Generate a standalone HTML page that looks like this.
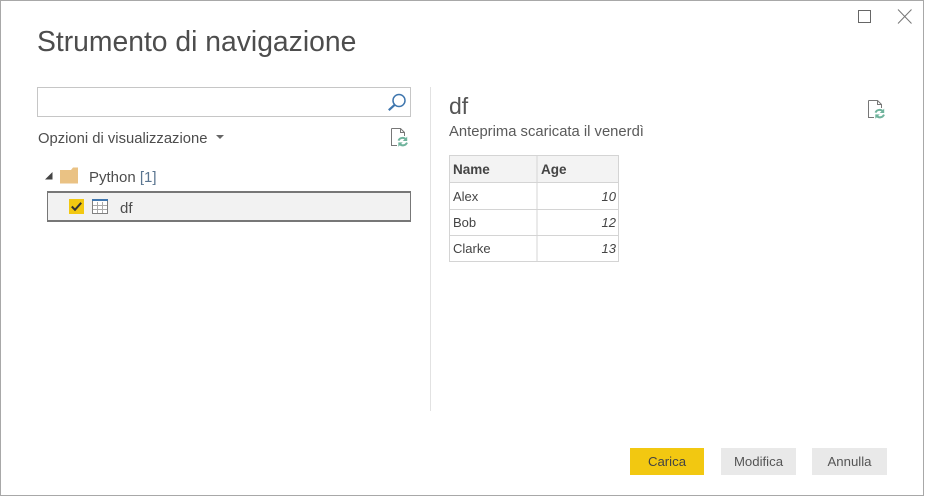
<!DOCTYPE html>
<html><head><meta charset="utf-8">
<style>
html,body{margin:0;padding:0;width:925px;height:498px;overflow:hidden;background:#fff;font-family:"Liberation Sans",sans-serif;color:#444}
div,svg{position:absolute;box-sizing:border-box}
.t{white-space:nowrap;line-height:1}
.c{position:absolute;white-space:nowrap;line-height:1;font-size:13px;color:#444}
.btn{height:27px;top:448px;text-align:center;line-height:28px;font-size:13.2px;color:#555;background:#e9e9e9}
</style></head><body>
<div style="left:0;top:0;width:924px;height:496px;border:1px solid #a8a8a8"></div>

<div class="t" style="left:37px;top:27px;font-size:28.3px;color:#4d4d4d">Strumento di navigazione</div>

<div style="left:37px;top:87px;width:374px;height:30px;border:1px solid #c6c6c6"></div>
<svg style="left:386px;top:91px" width="22" height="22" viewBox="0 0 22 22"><circle cx="13" cy="9.5" r="6" fill="none" stroke="#3f76ae" stroke-width="1.5"/><path d="M8.7 13.8L2.8 19.2" stroke="#3f76ae" stroke-width="2.2" fill="none"/></svg>

<div class="t" style="left:38px;top:132px;font-size:14.8px;color:#4d4d4d">Opzioni di visualizzazione</div>
<svg style="left:215px;top:134px" width="10" height="6"><path d="M1 1h8L5 5z" fill="#666"/></svg>

<svg style="left:390px;top:127px" width="20" height="22" viewBox="0 0 20 22"><path d="M1.5 1.5H10.5L14.5 5.5V9M1.5 1.5V18.5H7M10.5 1.5V5.5H14.5" fill="none" stroke="#777" stroke-width="1"/><path d="M8.5 13.6A4.5 4.5 0 0 1 16 12.4M17 15.6A4.5 4.5 0 0 1 9.5 16.8" fill="none" stroke="#6fb39c" stroke-width="2"/><path d="M17.2 9.6V14H12.8zM8.3 19.8V15.4H12.7z" fill="#6fb39c"/></svg>

<svg style="left:44px;top:171px" width="10" height="10"><path d="M1 8.5H8.5V1z" fill="#444"/></svg>
<svg style="left:60px;top:167px" width="19" height="17"><path d="M0 3H11L13 0.5H18V16.5H0z" fill="#eac284"/></svg>
<div class="t" style="left:89px;top:170px;font-size:15px;color:#4d4d4d">Python <span style="color:#5a7590">[1]</span></div>

<div style="left:47px;top:191px;width:364px;height:31px;background:#f2f2f2;border:1px solid #777;border-width:2px 1px 2px 1px"></div>
<div style="left:69px;top:199px;width:15px;height:15px;background:#f2c811"></div>
<svg style="left:69px;top:199px" width="15" height="15"><path d="M2.8 7.5L6 10.8L12.2 3.8" fill="none" stroke="#333" stroke-width="2"/></svg>
<svg style="left:92px;top:199px" width="16" height="15"><rect x=".5" y=".5" width="15" height="14" fill="#fff" stroke="#808080"/><path d="M0 1H16" stroke="#3f76ae" stroke-width="2"/><path d="M5.5 3V14M10.5 3V14M1 6.5H15M1 10.5H15" stroke="#aaa" fill="none"/></svg>
<div class="t" style="left:120px;top:201px;font-size:15px;color:#4d4d4d">df</div>

<div style="left:430px;top:87px;width:1px;height:324px;background:#e2e2e2"></div>

<div class="t" style="left:449px;top:95px;font-size:23px;color:#555">df</div>
<div class="t" style="left:449px;top:125px;font-size:14.8px;color:#5a5a5a">Anteprima scaricata il venerdì</div>
<svg style="left:867px;top:99px" width="20" height="22" viewBox="0 0 20 22"><path d="M1.5 1.5H10.5L14.5 5.5V9M1.5 1.5V18.5H7M10.5 1.5V5.5H14.5" fill="none" stroke="#777" stroke-width="1"/><path d="M8.5 13.6A4.5 4.5 0 0 1 16 12.4M17 15.6A4.5 4.5 0 0 1 9.5 16.8" fill="none" stroke="#6fb39c" stroke-width="2"/><path d="M17.2 9.6V14H12.8zM8.3 19.8V15.4H12.7z" fill="#6fb39c"/></svg>

<div style="left:449px;top:155px;width:170px;height:27px;background:#f3f3f3"></div>
<svg style="left:449px;top:155px" width="170" height="107"><path d="M.5 .5H169.5V106.5H.5zM88 0V107M0 27.5H170M0 54.5H170M0 80.5H170" fill="none" stroke="#d4d4d4"/></svg>
<div class="c" style="left:453px;top:163px;font-weight:bold;font-size:13.5px">Name</div>
<div class="c" style="left:541px;top:163px;font-weight:bold;font-size:13.5px">Age</div>
<div class="c" style="left:453px;top:190px">Alex</div>
<div class="c" style="left:453px;top:216px">Bob</div>
<div class="c" style="left:453px;top:242px">Clarke</div>
<div class="c" style="right:309px;top:190px;font-style:italic">10</div>
<div class="c" style="right:309px;top:216px;font-style:italic">12</div>
<div class="c" style="right:309px;top:242px;font-style:italic">13</div>

<svg style="left:858px;top:10px" width="14" height="14"><rect x=".5" y=".5" width="12" height="12" fill="none" stroke="#666"/></svg>
<svg style="left:897px;top:9px" width="16" height="16"><path d="M1 .5L14.5 14.5M14.5 .5L1 14.5" stroke="#777" fill="none"/></svg>

<div class="btn" style="left:630px;width:74px;background:#f2c811;color:#444">Carica</div>
<div class="btn" style="left:721px;width:75px">Modifica</div>
<div class="btn" style="left:812px;width:75px">Annulla</div>
</body></html>
